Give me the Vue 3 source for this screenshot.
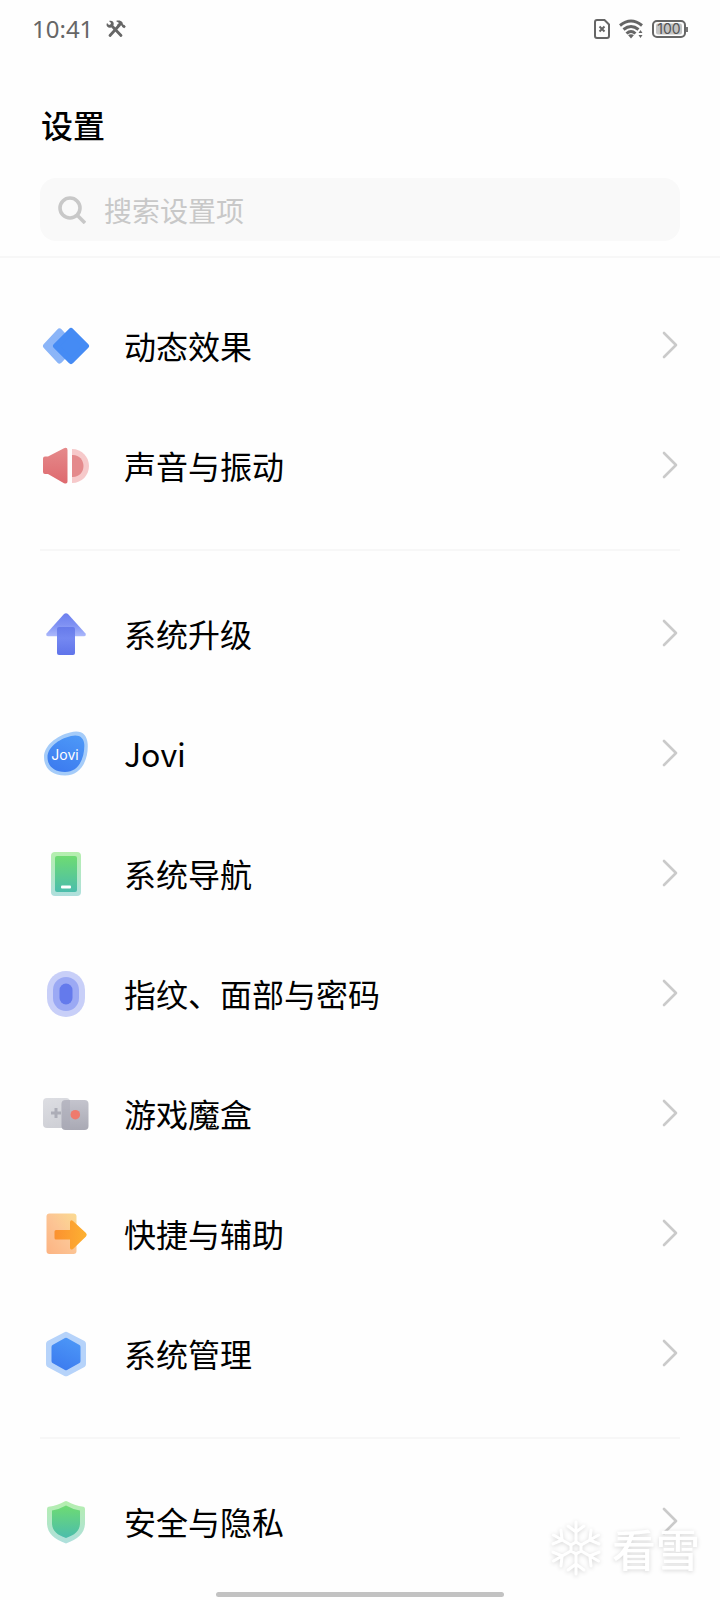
<script setup>
import { ref } from 'vue'

const keyword = ref('')

const groups = [
    [
        {id: 'motion', label: '动态效果'},
        {id: 'sound', label: '声音与振动'},
    ],
    [
        {id: 'upgrade', label: '系统升级'},
        {id: 'jovi', label: 'Jovi'},
        {id: 'navigation', label: '系统导航'},
        {id: 'biometrics', label: '指纹、面部与密码'},
        {id: 'game', label: '游戏魔盒'},
        {id: 'shortcut', label: '快捷与辅助'},
        {id: 'system', label: '系统管理'},
    ],
    [
        {id: 'privacy', label: '安全与隐私'},
    ],
]
</script>

<template>
    <div class="screen">
        <div class="status-bar">
            <div class="status-left">
                <time class="clock">10:41</time>
                <svg class="tools" viewBox="0 0 20 18" width="20" height="18">
                    <g fill="none" stroke="#666" stroke-width="2.8" stroke-linecap="round">
                        <path d="M5.500 5.500 L15 15.500" />
                        <path d="M13.500 5 L4 15.500" />
                    </g>
                    <path d="M3 1 L5 3 L4.600 4.600 L3 5 L1 3 C-0.500 6 2 8.500 5 7.500 L7.500 5 C8.500 2 6 -0.300 3 1Z" fill="#666" />
                    <path d="M10 1 C12.500 0 15 0.500 16.500 2.500 L17 4.500 L18.500 5 L19.800 6.800 L18.200 8.300 L16.200 7 L15.800 5.800 L14 5 L12 6.500 L11 5 L13 3Z" fill="#666" />
                </svg>
            </div>
            <div class="status-right">
                <svg viewBox="0 0 16 20" width="16" height="20" fill="none" stroke="#666" stroke-width="2">
                    <path d="M3 1 H10.500 L15 5.500 V17 Q15 19 13 19 H3 Q1 19 1 17 V3 Q1 1 3 1Z" />
                    <path d="M5.500 7.500 L10.500 12.500 M10.500 7.500 L5.500 12.500" />
                </svg>
                <svg viewBox="0 0 24 20" width="24" height="20">
                    <g fill="none" stroke="#666" stroke-width="3">
                        <path d="M1 6.500 Q12 -2.500 23 6.500" />
                        <path d="M4.500 10.500 Q12 4.500 19.500 10.500" />
                        <path d="M7.500 14.500 Q12 10.500 16.500 14.500" />
                    </g>
                    <path d="M9 16 Q12 14.300 15 16 L12 19.500Z" fill="#666" />
                    <path d="M19.500 14 L21.500 11 L23.500 14Z M19.500 16 L21.500 19 L23.500 16Z" fill="#666" />
                </svg>
                <svg viewBox="0 0 36 20" width="36" height="20">
                    <rect x="1" y="2" width="32" height="16" rx="4" fill="none" stroke="#666" stroke-width="2" />
                    <rect x="4" y="4.500" width="26" height="11" rx="2" fill="#c4c4c4" />
                    <path d="M35 8 V13" stroke="#777" stroke-width="2" />
                    <text x="17" y="15" text-anchor="middle" class="battery-text">100</text>
                </svg>
            </div>
        </div>

        <header class="header">
            <h1>设置</h1>
            <label class="search">
                <svg viewBox="0 0 28 28" width="28" height="28" fill="none" stroke="#c8c8c8" stroke-width="3.6">
                    <circle cx="12" cy="12" r="10" />
                    <path d="M19.500 19.500 L27 27" />
                </svg>
                <input v-model="keyword" type="text" placeholder="搜索设置项" aria-label="搜索设置项">
            </label>
        </header>

        <!-- gradients shared by the row icons -->
        <svg class="defs" width="0" height="0" aria-hidden="true">
            <defs>
                <linearGradient id="g-blue" x1="0.7" y1="0" x2="0.3" y2="1">
                    <stop offset="0" stop-color="#4c97f7" />
                    <stop offset="1" stop-color="#3c7bef" />
                </linearGradient>
                <linearGradient id="g-red" x1="0" y1="0" x2="0" y2="1">
                    <stop offset="0" stop-color="#e58a8b" />
                    <stop offset="1" stop-color="#de696e" />
                </linearGradient>
                <linearGradient id="g-head" x1="0" y1="0" x2="0" y2="1">
                    <stop offset="0" stop-color="#6c7fee" />
                    <stop offset="0.5" stop-color="#7f91f3" />
                    <stop offset="1" stop-color="#acb9fb" />
                </linearGradient>
                <linearGradient id="g-stem" x1="0" y1="0" x2="0" y2="1">
                    <stop offset="0" stop-color="#667aea" />
                    <stop offset="0.4" stop-color="#7488f1" />
                    <stop offset="1" stop-color="#6074ea" />
                </linearGradient>
                <linearGradient id="g-green" x1="0" y1="0" x2="0" y2="1">
                    <stop offset="0" stop-color="#6edb72" />
                    <stop offset="1" stop-color="#4bbdac" />
                </linearGradient>
                <linearGradient id="g-green-light" x1="0" y1="0" x2="0" y2="1">
                    <stop offset="0" stop-color="#b5efad" />
                    <stop offset="1" stop-color="#aedfdd" />
                </linearGradient>
                <linearGradient id="g-pad-light" x1="0" y1="0" x2="0.3" y2="1">
                    <stop offset="0" stop-color="#dddee3" />
                    <stop offset="1" stop-color="#cfd0d6" />
                </linearGradient>
                <linearGradient id="g-pad-dark" x1="0" y1="0" x2="0" y2="1">
                    <stop offset="0" stop-color="#c4c4cd" />
                    <stop offset="1" stop-color="#a9a9b4" />
                </linearGradient>
                <linearGradient id="g-door" x1="0" y1="1" x2="1" y2="0">
                    <stop offset="0" stop-color="#fcb382" />
                    <stop offset="0.5" stop-color="#fcc494" />
                    <stop offset="1" stop-color="#fbdb92" />
                </linearGradient>
                <linearGradient id="g-orange" x1="0" y1="0" x2="1" y2="0">
                    <stop offset="0" stop-color="#fb9130" />
                    <stop offset="1" stop-color="#fdb132" />
                </linearGradient>
            </defs>
        </svg>

        <main class="list">
            <ul v-for="(group, index) in groups" :key="index" class="group">
                <li v-for="item in group" :key="item.id">
                    <a class="row" :href="'#' + item.id">
                        <svg class="icon" viewBox="0 0 48 48" width="48" height="48" aria-hidden="true">
                            <g v-if="item.id === 'motion'" stroke-width="6" stroke-linejoin="round">
                                <path d="M17.500 10.500 L31 25 L17.500 39.500 L4 25Z" fill="#8bb5f8" stroke="#8bb5f8" />
                                <path d="M29 10 L44 25 L29 40 L14 25Z" fill="#458bf4" stroke="#458bf4" />
                            </g>
                            <g v-else-if="item.id === 'sound'">
                                <path d="M30 8 C40 8 47 16 47 25 C47 34 40 42 30 42Z" fill="#f6c9ca" />
                                <path d="M30 14 C37 13.500 41.500 19 41.500 25 C41.500 31 37 36.500 30 36Z" fill="#e48a8c" />
                                <path d="M3 15.500 H6 L22 7.200 Q25.500 6 25.500 9 V40.500 Q25.500 43.500 22 42.200 L6 33 H3 Q1 33 1 31 V17.500 Q1 15.500 3 15.500Z" fill="url(#g-red)" />
                            </g>
                            <g v-else-if="item.id === 'upgrade'">
                                <path d="M22 5 Q24 3.500 26 5 L43.500 24.500 Q44.500 27 42 27.300 H6 Q3.500 27 4.500 24.500Z" fill="url(#g-head)" />
                                <rect x="15" y="18" width="18" height="28" rx="2" fill="url(#g-stem)" />
                            </g>
                            <g v-else-if="item.id === 'jovi'">
                                <path d="M28 3.500 C39 0.500 45 5 45.700 15 C46.500 28 41 46.500 23 46.500 C9 46.500 2 38.500 2 28 C2 17 14 7 28 3.500Z" fill="#a5ccf9" />
                                <path d="M29 7 C37 5 42 8.500 42.300 15.500 C42.800 27 38 43 23 43 C12 43 5.500 37 5.500 28 C5.500 19 16 10 29 7Z" fill="url(#g-blue)" />
                                <text x="23" y="31" text-anchor="middle" class="jovi-text">Jovi</text>
                            </g>
                            <g v-else-if="item.id === 'navigation'">
                                <rect x="9" y="3" width="30" height="44" rx="4" fill="url(#g-green-light)" />
                                <rect x="13" y="7" width="22" height="36" rx="2" fill="url(#g-green)" />
                                <rect x="19" y="36.500" width="10" height="3" rx="1" fill="#fff" />
                            </g>
                            <g v-else-if="item.id === 'biometrics'">
                                <rect x="5" y="2" width="38" height="46" rx="19" fill="#c8cff8" />
                                <rect x="11" y="8" width="26" height="34" rx="13" fill="#9ba9f4" />
                                <rect x="17.500" y="14.500" width="13" height="21" rx="6.500" fill="#647aec" />
                            </g>
                            <g v-else-if="item.id === 'game'">
                                <rect x="1" y="9" width="27" height="30" rx="4" fill="url(#g-pad-light)" />
                                <rect x="19.500" y="11" width="27" height="30" rx="4" fill="url(#g-pad-dark)" />
                                <path d="M19.500 15 Q19.500 11 24 11 H28 V39 H20Z" fill="#a9a9b6" opacity="0.45" />
                                <path d="M14 19 V29 M9 24 H19" stroke="#acadb7" stroke-width="3" />
                                <circle cx="33.300" cy="25.700" r="4.800" fill="#ee7b6d" />
                            </g>
                            <g v-else-if="item.id === 'shortcut'">
                                <rect x="4.500" y="4.500" width="30" height="40.500" rx="3" fill="url(#g-door)" />
                                <path d="M14 21 H28 V13 Q28.500 10 31 12 L44 24 Q45.500 25.700 44 27.500 L31 40 Q28.500 41.500 28 39 V30.500 H14 Q12.500 30.500 12.500 29 V22.500 Q12.500 21 14 21Z" fill="url(#g-orange)" />
                            </g>
                            <g v-else-if="item.id === 'system'">
                                <path d="M22 3.500 Q24 2.200 26 3.500 L42.500 12 Q44 13 44 15 V35 Q44 37 42.500 38 L26 46.700 Q24 48 22 46.700 L5.500 38 Q4 37 4 35 V15 Q4 13 5.500 12Z" fill="#b6d3fa" />
                                <path d="M23 9 Q24 8.300 25 9 L37.500 16 Q38.500 16.700 38.500 18 V32 Q38.500 33.300 37.500 34 L25 41 Q24 41.700 23 41 L10.500 34 Q9.500 33.300 9.500 32 V18 Q9.500 16.700 10.500 16Z" fill="url(#g-blue)" />
                            </g>
                            <g v-else>
                                <path d="M22.500 4.500 Q24 3.600 25.500 4.500 Q32 8.500 41.500 9.800 Q43 10.200 43 12 V26 C43 36 36 42 24 46.500 C12 42 5 36 5 26 V12 Q5 10.200 6.500 9.800 Q16 8.500 22.500 4.500Z" fill="url(#g-green-light)" />
                                <path d="M24 8.500 Q30 12 38 13.500 V26 C38 33.500 33 38 24 41 C15 38 10 33.500 10 26 V13.500 Q18 12 24 8.500Z" fill="url(#g-green)" />
                            </g>
                        </svg>
                        <span class="label">{{ item.label }}</span>
                        <svg class="chevron" viewBox="0 0 16 28" width="16" height="28" aria-hidden="true">
                            <path d="M2 2 L14 14 L2 26" />
                        </svg>
                    </a>
                </li>
            </ul>
        </main>

        <footer class="nav">
            <div class="nav-handle"></div>
        </footer>

        <div class="watermark">
            <svg viewBox="-28 -28 56 56" width="56" height="56" aria-hidden="true">
                <g fill="none" stroke="#fff" stroke-width="3" stroke-linecap="round" stroke-linejoin="round">
                    <path d="M0 -6 L5 -3 V3 L0 6 L-5 3 V-3Z" />
                    <path v-for="n in 6" :key="n" :transform="`rotate(${n * 60})`" d="M0 -6 V-26 M-8 -22 L0 -16 L8 -22" />
                </g>
            </svg>
            <span>看雪</span>
        </div>
    </div>
</template>

<style>
body {
    background: #fefefe;
}
</style>

<style scoped>
.screen {
    position: relative;
    background: #fefefe;
    color: #000;
    font-family: "Noto Sans CJK SC", sans-serif;
}

.status-bar {
    display: flex;
    align-items: center;
    justify-content: space-between;
    height: 58px;
    padding: 0 32px;
}

.status-left {
    display: flex;
    align-items: center;
    gap: 13px;
}

.clock {
    font-family: "Noto Sans", sans-serif;
    font-size: 24px;
    line-height: 32px;
    color: #666;
}

.status-right {
    display: flex;
    align-items: center;
    gap: 9px;
}

.battery-text {
    font-family: Inter, sans-serif;
    font-size: 14px;
    fill: #555;
}

.jovi-text {
    font-family: Inter, sans-serif;
    font-size: 14px;
    fill: #fff;
}

.header {
    padding: 42px 40px 15px;
    border-bottom: 2px solid #f7f7f7;
}

h1 {
    margin: 0 0 30px;
    padding-left: 1px;
    font-size: 32px;
    line-height: 48px;
    font-weight: 500;
}

.search {
    display: flex;
    align-items: center;
    gap: 18px;
    height: 63px;
    padding: 0 18px;
    border-radius: 16px;
    background: #f9f9f9;
}

.search input {
    flex: 1;
    min-width: 0;
    height: 40px;
    padding: 0;
    border: 0;
    outline: none;
    background: transparent;
    color: #000;
    font-family: inherit;
    font-size: 28px;
    line-height: 40px;
}

.search input::placeholder {
    color: #c8c8c8;
    opacity: 1;
}

.defs {
    display: block;
}

.list {
    padding: 5px 40px 0;
}

.group {
    margin: 0;
    padding: 22px 0 24px;
    list-style: none;
}

.group + .group {
    border-top: 2px solid #f7f7f7;
}

.group:last-child {
    padding-bottom: 0;
}

.row {
    display: flex;
    align-items: center;
    height: 120px;
    padding: 0 2px;
    color: inherit;
    text-decoration: none;
}

.icon {
    flex: none;
    margin-right: 34px;
}

.label {
    flex: 1;
    font-size: 32px;
    line-height: 48px;
}

.chevron {
    flex: none;
    fill: none;
    stroke: #cacaca;
    stroke-width: 2.6;
    stroke-linecap: round;
    stroke-linejoin: round;
}

.nav {
    display: flex;
    justify-content: center;
    padding: 11px 0 3px;
}

.nav-handle {
    width: 40%;
    height: 5px;
    border-radius: 3px;
    background: #c2c2c2;
}

/* floats over the last row */
.watermark {
    position: absolute;
    right: 20px;
    bottom: 24px;
    display: flex;
    align-items: center;
    gap: 8px;
    color: #fff;
    font-size: 44px;
    font-weight: 500;
    line-height: 56px;
    filter: drop-shadow(0 1px 2px rgba(0, 0, 0, 0.16));
    pointer-events: none;
}
</style>
